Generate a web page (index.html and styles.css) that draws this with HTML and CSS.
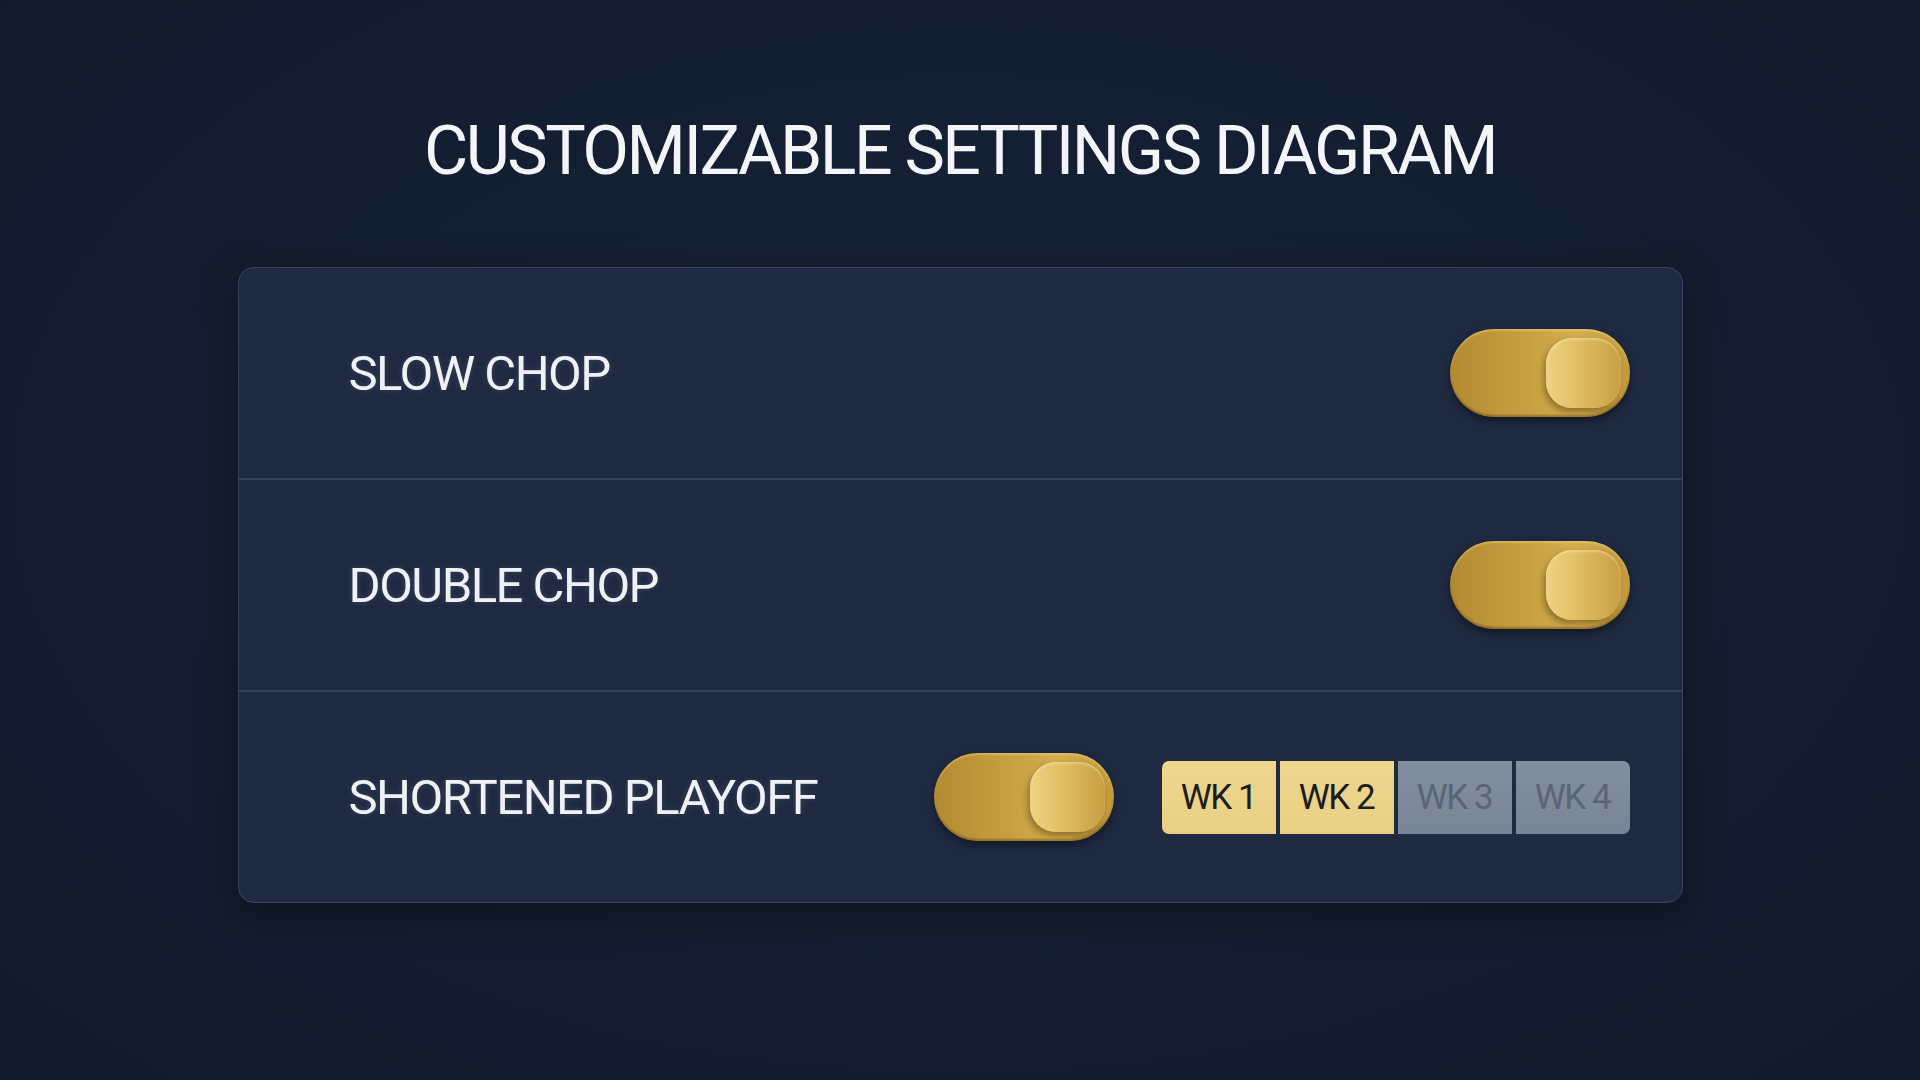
FILE: index.html
```html
<!DOCTYPE html>
<html lang="en">

<head>
    <meta charset="UTF-8">
    <meta name="viewport" content="width=device-width, initial-scale=1.0">
    <title>Customizable Settings Diagram</title>
    <link rel="stylesheet" href="styles.css">
</head>

<body>
    <h1 class="title">CUSTOMIZABLE SETTINGS DIAGRAM</h1>

    <div class="card">
        <div class="row">
            <span class="label">SLOW CHOP</span>
            <div class="controls">
                <div class="toggle"><span class="knob"></span></div>
            </div>
        </div>
        <div class="row">
            <span class="label">DOUBLE CHOP</span>
            <div class="controls">
                <div class="toggle"><span class="knob"></span></div>
            </div>
        </div>
        <div class="row">
            <span class="label">SHORTENED PLAYOFF</span>
            <div class="controls">
                <div class="toggle"><span class="knob"></span></div>
                <div class="weeks">
                    <span class="wk on">WK 1</span>
                    <span class="wk on">WK 2</span>
                    <span class="wk">WK 3</span>
                    <span class="wk">WK 4</span>
                </div>
            </div>
        </div>
    </div>
</body>

</html>
```

FILE: styles.css
```css
html,
body {
    margin: 0;
    height: 100%;
}

body {
    background: radial-gradient(ellipse at 50% 45%, #18233b 0%, #141e31 55%, #111a2b 100%);
    font-family: Roboto, "Noto Sans", sans-serif;
    color: #eef1f6;
    overflow: hidden;
}

.title {
    margin: 117px 0 0;
    text-align: center;
    font-size: 68px;
    font-weight: 400;
    line-height: 1;
    letter-spacing: -2.5px;
    color: #f3f5f8;
}

.card {
    width: 1443px;
    margin: 82px auto 0;
    background: #1f2a42;
    border: 1.5px solid #38445e;
    border-radius: 16px;
    box-shadow: 0 10px 40px rgba(0, 0, 0, 0.35);
}

.row {
    display: flex;
    align-items: center;
    height: 210px;
    padding: 0 52px 0 110px;
}

.row + .row {
    border-top: 2px solid #34415b;
}

.label {
    font-size: 49px;
    letter-spacing: -1.5px;
    color: #eef2f7;
    text-shadow: 0 0 6px rgba(255, 255, 255, 0.12);
}

.controls {
    margin-left: auto;
    display: flex;
    align-items: center;
    gap: 48px;
}

.toggle {
    width: 180px;
    height: 88px;
    box-sizing: border-box;
    border-radius: 44px;
    padding-right: 9px;
    display: flex;
    align-items: center;
    justify-content: flex-end;
    background: linear-gradient(90deg, #b38a30 0%, #c9a143 45%, #d3ad50 70%, #c49b3d 100%);
    box-shadow: inset 0 -2px 2px rgba(90, 60, 10, 0.45), inset 0 2px 2px rgba(255, 230, 150, 0.35), 0 4px 10px rgba(0, 0, 0, 0.45);
}

.knob {
    width: 75px;
    height: 70px;
    border-radius: 26px;
    background: linear-gradient(90deg, #efd382 0%, #e0bd62 45%, #c89f42 100%);
    box-shadow: -2px 4px 6px rgba(95, 65, 15, 0.55), inset 0 2px 2px rgba(255, 240, 190, 0.4);
}

.weeks {
    display: flex;
    gap: 4px;
}

.wk {
    width: 114px;
    height: 73px;
    display: flex;
    align-items: center;
    justify-content: center;
    font-size: 35px;
    letter-spacing: -1.5px;
    background: linear-gradient(180deg, #838e9e 0%, #798596 100%);
    color: #5a6576;
}

.wk.on {
    background: linear-gradient(180deg, #eed68f 0%, #e8cf83 100%);
    color: #1c1d20;
}

.wk:first-child {
    border-radius: 7px 0 0 7px;
}

.wk:last-child {
    border-radius: 0 7px 7px 0;
}
```
